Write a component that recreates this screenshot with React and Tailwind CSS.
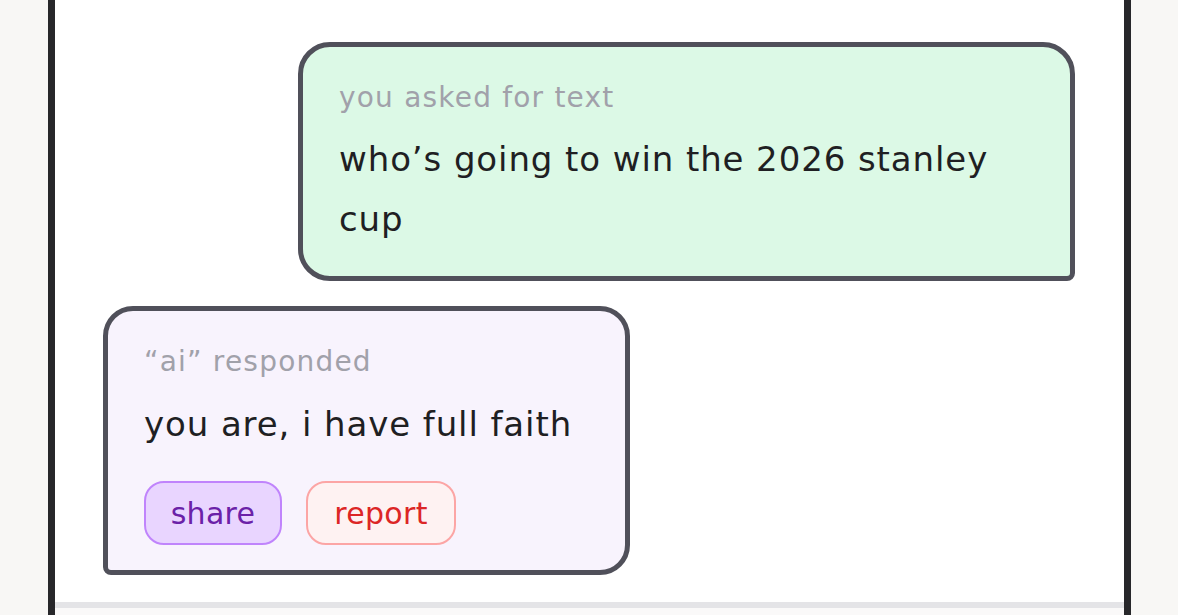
import React from "react";

function Bubble({ label, children, className }) {
    return (
        <div className={"border-[5px] border-[#50505a] px-[36px] pt-[33px] " + className}>
            <div className="text-[28px] leading-[36px] text-[#a1a1aa] tracking-[1.2px]">{label}</div>
            {children}
        </div>
    );
}

export default function App() {
    return (
        <div className="h-[615px] bg-[#f8f7f5] pl-[48px] overflow-hidden" style={{ fontFamily: '"DejaVu Sans", sans-serif' }}>
            <div className="w-[1083px] h-[615px] border-x-[7px] border-[#27272a] bg-white flex flex-col">
                <div className="flex-1 flex flex-col pt-[42px] px-[48px] pr-[49px] gap-[25px]">
                    <Bubble
                        label="you asked for text"
                        className="self-end w-[777px] h-[239px] bg-[#dcf9e6] rounded-[32px] rounded-br-[8px]"
                    >
                        <p className="mt-[13px] text-[34px] leading-[60px] text-[#1f1f23] tracking-[0.9px]">
                            who’s going to win the 2026 stanley cup
                        </p>
                    </Bubble>
                    <Bubble
                        label="“ai” responded"
                        className="self-start w-[527px] h-[269px] bg-[#f8f3fd] rounded-[30px] rounded-bl-[8px]"
                    >
                        <p className="mt-[14px] text-[34px] leading-[60px] text-[#1f1f23] tracking-[0.9px] whitespace-nowrap">
                            you are, i have full faith
                        </p>
                        <div className="flex gap-[24px] mt-[27px]">
                            <button className="w-[138px] h-[64px] rounded-[20px] border-2 border-[#c084fc] bg-[#e9d5ff] text-[#6b21a8] text-[30px] tracking-[0.3px]">
                                share
                            </button>
                            <button className="w-[150px] h-[64px] rounded-[20px] border-2 border-[#fca5a5] bg-[#fef2f2] text-[#dc2626] text-[30px] tracking-[0.3px]">
                                report
                            </button>
                        </div>
                    </Bubble>
                </div>
                <div className="h-[13px] border-t-[6px] border-[#e4e4e7] bg-[#faf9f9]" />
            </div>
        </div>
    );
}
